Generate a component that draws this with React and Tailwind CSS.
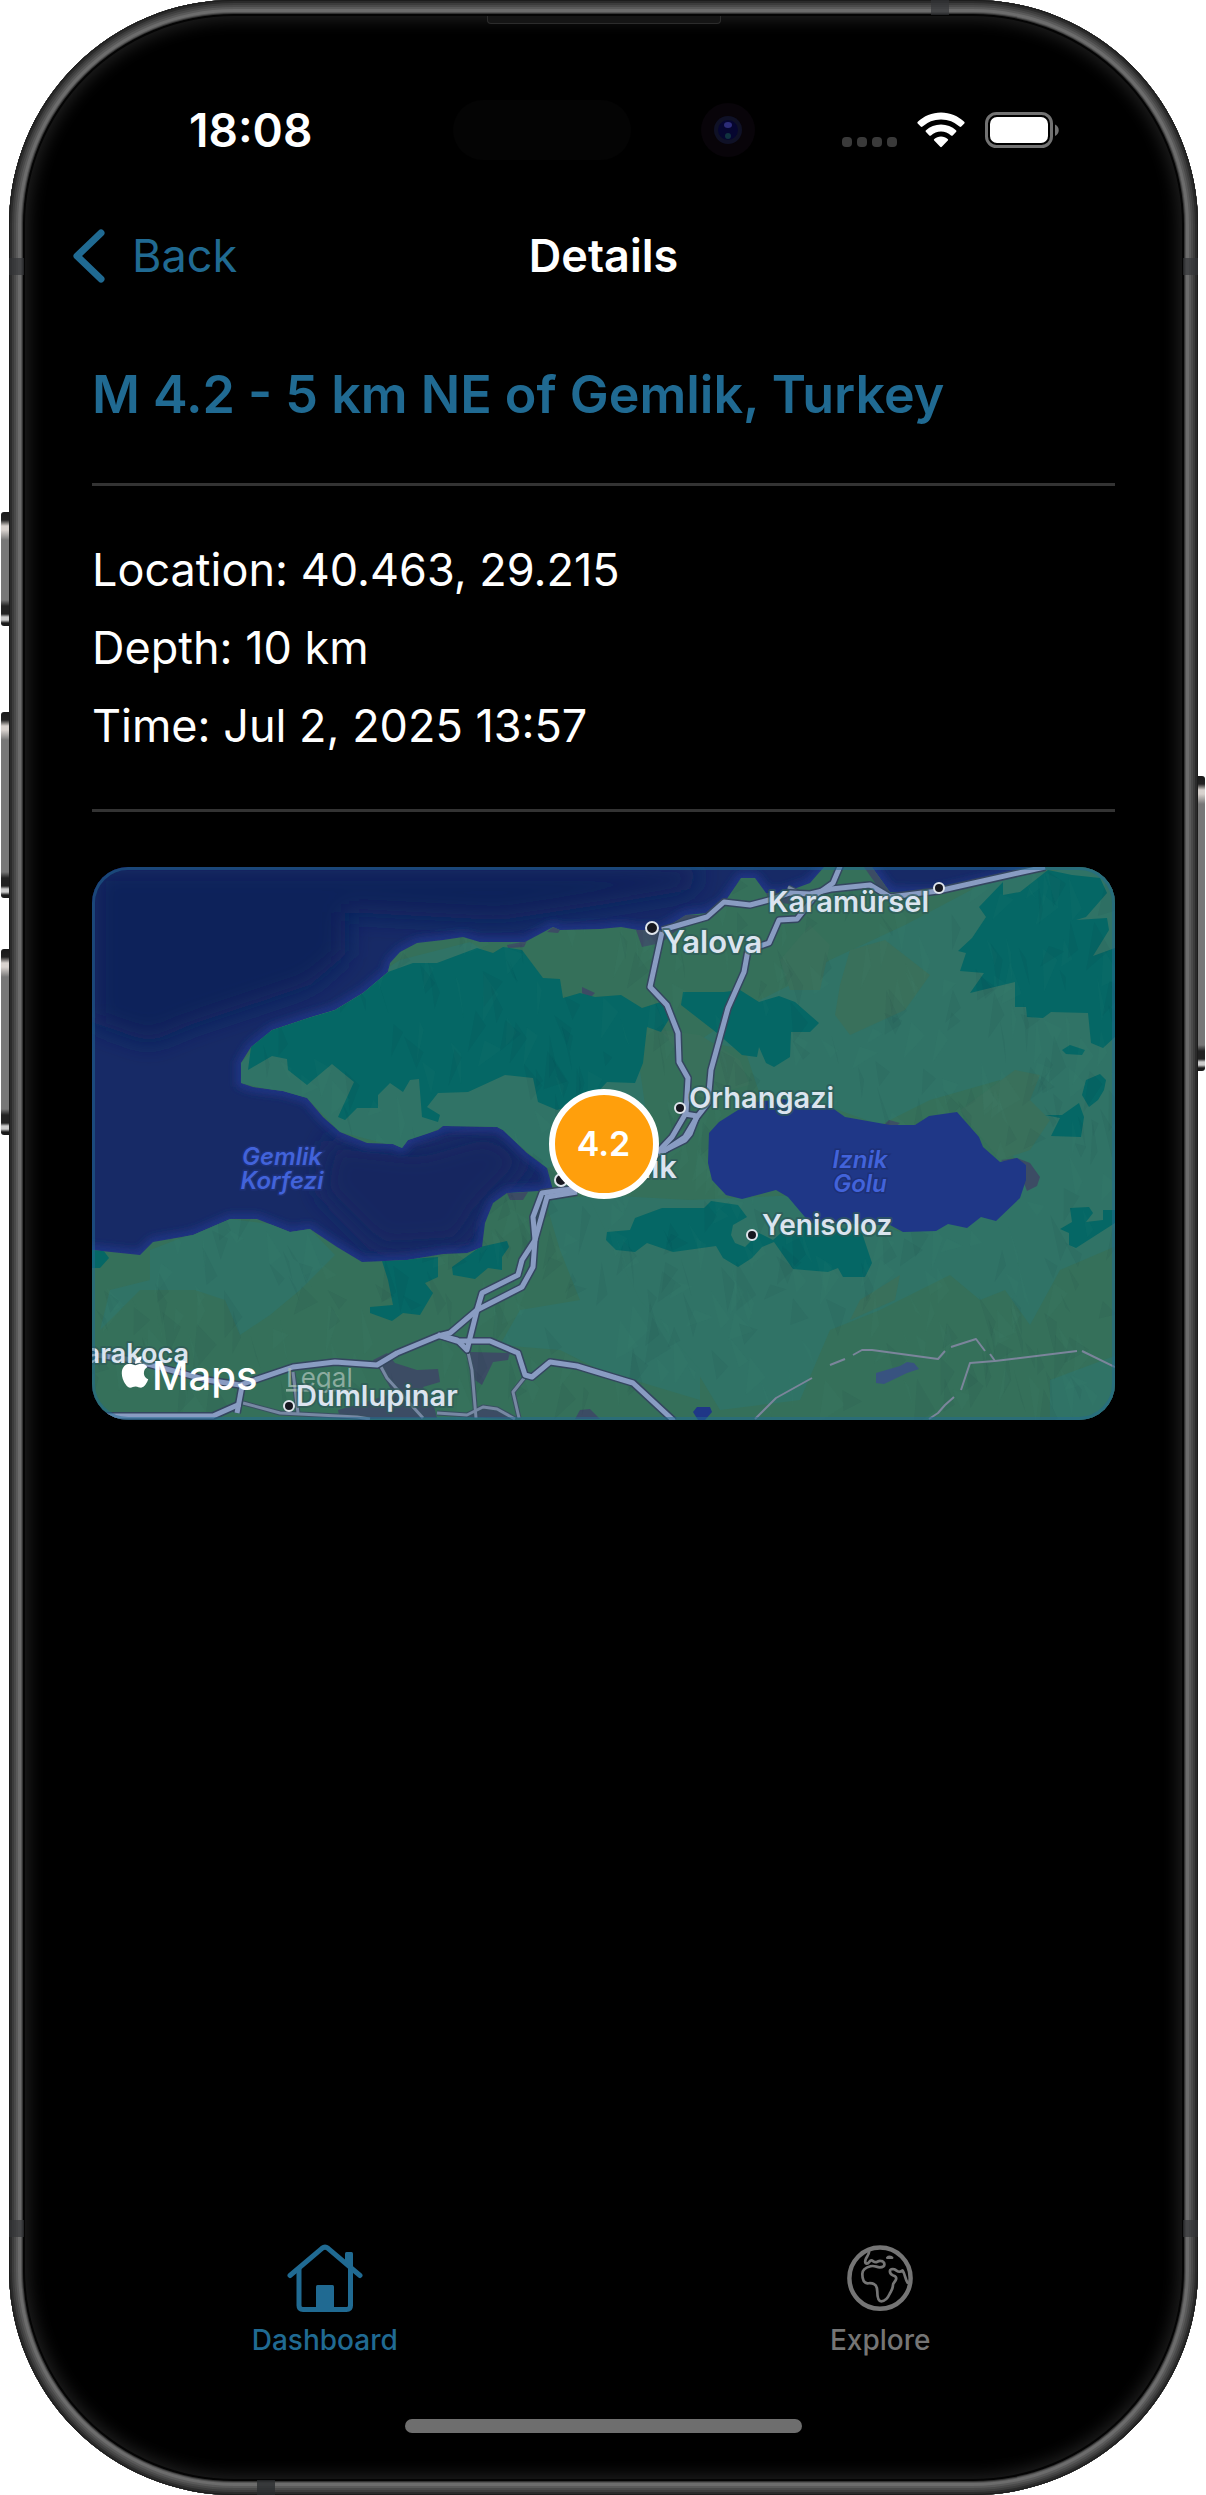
import React from "react";
import { FaApple } from "react-icons/fa";

const SEA_DEEP =
  "92,867 600,867 700,867 690,890 600,905 500,920 400,915 345,912 345,955 310,985 190,1025 150,1042 92,1022";

const LAND =
  "241,1063 251,1047 272,1030 308,1018 335,1010 363,993 388,972 390,963 400,952 417,943 443,940 463,937 480,942 525,942 553,927 560,930 600,929 621,927 638,930 662,930 686,915 707,913 724,903 741,878 755,878 766,893 783,893 810,883 824,867 824,850 872,850 872,867 890,892 934,893 1044,867 1044,850 1130,850 1130,1440 70,1440 70,1250 92,1250 140,1255 153,1242 193,1235 230,1219 257,1219 290,1232 310,1229 337,1247 362,1262 407,1260 443,1254 467,1253 482,1247 485,1223 493,1203 507,1193 553,1190 547,1168 527,1153 503,1130 497,1127 443,1126 438,1130 408,1140 402,1148 393,1144 367,1143 340,1132 323,1117 307,1098 283,1091 253,1087 241,1083";

const HILLS = [
  "241,1063 272,1030 308,1018 400,960 470,942 500,960 560,1060 640,1070 650,1140 547,1168 497,1127 443,1126 402,1148 340,1132 307,1098 241,1083",
  "790,985 830,960 905,925 990,880 1130,860 1130,1240 1060,1270 1030,1325 1005,1290 980,1300 950,1275 880,1310 830,1330 800,1400 720,1410 690,1360 640,1350 590,1290 560,1240 545,1200 600,1195 690,1200 800,1195 900,1232 1030,1180 980,1110 1000,1080 930,1100 880,1125 830,1107 760,1095 745,1050 700,1040 760,1000",
  "150,1250 230,1219 310,1229 335,1255 300,1290 270,1315 240,1335 225,1300 195,1290 140,1290 100,1330 110,1290 150,1280",
  "545,1200 590,1200 640,1300 700,1370 700,1400 600,1370 560,1350 500,1345 520,1310 580,1300 560,1250",
  "1050,1380 1130,1350 1130,1430 1050,1430",
];

const MEADOWS = [
  "850,950 885,940 930,975 905,1010 850,1035 835,1015 840,985",
  "960,1110 1015,1070 1040,1075 1030,1100 1050,1120 1030,1150 1000,1160 975,1130",
  "660,1030 700,1035 740,1060 750,1085 690,1100 685,1060",
  "780,960 810,925 830,945 820,990 790,990",
  "860,1300 900,1275 895,1300 850,1320",
];

const FORESTS = [
  "251,1047 272,1030 308,1018 335,1010 363,993 388,972 413,963 437,963 477,948 493,953 503,947 522,950 543,978 560,979 563,998 580,993 595,997 621,995 642,1008 667,1000 673,1013 661,1032 647,1027 643,1063 635,1083 607,1082 590,1100 557,1110 538,1102 533,1078 505,1075 468,1092 438,1093 427,1107 440,1115 438,1122 422,1117 419,1079 410,1080 403,1092 390,1083 378,1095 378,1108 357,1108 345,1120 338,1117 354,1082 332,1064 307,1085 288,1070 287,1059 272,1056 248,1070",
  "683,992 724,992 740,990 759,1002 779,996 795,1002 819,1023 810,1032 791,1032 790,1057 774,1067 766,1063 759,1047 757,1057 742,1055 717,1033 681,1005",
  "1003,882 1003,895 1020,892 1048,870 1072,875 1100,878 1107,893 1086,917 1076,920 1107,918 1109,930 1093,956 1115,948 1115,1037 1103,1048 1091,1043 1088,1013 1051,1012 1043,1018 1027,1017 1026,1007 1015,1007 1015,982 970,993 984,973 960,971 966,953 958,951 972,938 986,917 979,907",
  "1062,1050 1070,1045 1085,1050 1082,1055 1066,1054",
  "1086,1080 1100,1074 1106,1080 1104,1090 1098,1100 1089,1107 1082,1095",
  "1045,1115 1062,1115 1079,1103 1084,1117 1081,1137 1051,1136 1060,1118",
  "1070,1208 1089,1207 1093,1213 1086,1222 1103,1220 1103,1210 1115,1210 1115,1223 1076,1248 1069,1245 1069,1233 1060,1229 1072,1222",
  "607,1232 630,1230 635,1218 662,1208 704,1208 711,1201 738,1205 747,1217 733,1225 731,1235 735,1243 745,1247 759,1233 773,1240 790,1225 810,1220 862,1233 872,1263 865,1277 843,1277 838,1268 828,1272 793,1269 774,1242 762,1247 752,1258 738,1267 723,1258 716,1246 673,1252 647,1243 635,1252 616,1250 606,1240",
  "382,1261 438,1257 438,1277 425,1283 433,1293 420,1315 403,1313 392,1321 370,1313 370,1307 393,1305 388,1280",
  "452,1267 480,1247 507,1241 509,1247 502,1257 502,1270 488,1268 475,1279 453,1275",
  "92,1249 103,1250 109,1258 100,1268 92,1268",
];

const LAKE =
  "709,1133 719,1122 738,1110 755,1102 783,1099 831,1107 845,1117 890,1125 915,1125 929,1116 957,1112 979,1137 983,1147 1000,1162 1017,1158 1026,1165 1026,1180 1020,1198 996,1221 981,1217 967,1228 948,1224 936,1231 903,1232 890,1225 810,1223 788,1197 776,1190 742,1199 726,1195 712,1180 708,1163";

const TOWNS = [
  "1001,1160 1017,1158 1030,1163 1040,1177 1037,1186 1027,1191 1024,1183 1026,1165 1015,1160 1005,1163",
  "373,1360 387,1353 395,1363 417,1370 438,1369 440,1382 423,1387 433,1403 437,1418 340,1419 338,1410 363,1403 393,1393 382,1373",
  "470,1352 510,1353 508,1360 493,1362 482,1385 475,1380",
  "463,1417 480,1408 510,1413 513,1419",
  "580,1410 590,1409 600,1419 575,1419",
  "636,930 662,930 683,915 704,915 680,928 661,943 642,947",
  "766,893 783,893 800,905 770,902",
  "864,867 872,867 890,892 880,890",
  "507,945 527,941 524,947 508,948",
  "547,932 553,927 560,930 558,933",
  "582,987 595,993 590,998 582,993",
  "507,1193 528,1192 523,1200 510,1200",
  "889,1120 900,1123 895,1127 883,1126",
];

const HIGHWAYS = [
  "662,930 707,917 724,902 750,905 769,900 790,893 810,894 831,889 870,885 890,897 938,891 1045,867",
  "841,864 833,883 816,895 797,919 779,920 769,943 748,950 744,972 728,1008 711,1070 708,1103 697,1117 685,1137 664,1151",
  "662,932 650,987 667,1005 678,1033 679,1062 688,1078 686,1113 672,1137 655,1155",
  "685,1114 697,1116 690,1134 685,1140 661,1152 600,1187 563,1190 542,1193 533,1217 535,1240 522,1260 518,1275 482,1293 477,1310 467,1350 457,1340 438,1335",
  "577,1192 547,1197 535,1240 533,1267 522,1287 477,1310 450,1333 438,1336 397,1353 377,1365 335,1362 293,1367 240,1385 207,1380 133,1360 88,1354",
  "438,1335 457,1341 490,1341 518,1353 525,1375 532,1377 550,1362 577,1366 590,1370 633,1383 674,1421",
  "242,1386 237,1413",
  "240,1404 213,1416 88,1416",
];

const STREETS = [
  "243,1403 280,1413 357,1417 370,1419",
  "293,1372 298,1413",
  "380,1365 387,1378 423,1418",
  "468,1352 472,1370 476,1418",
  "437,1413 467,1415 483,1407 497,1409 515,1419",
  "525,1377 513,1392 519,1418",
  "788,887 800,893",
];

const BORDERS = [
  "755,1419 776,1398 812,1378",
  "830,1365 845,1359",
  "853,1355 862,1350 872,1350 938,1359 945,1351",
  "951,1347 976,1339 985,1351",
  "990,1354 995,1361",
  "1077,1351 995,1361 970,1363 961,1390",
  "954,1397 945,1405 938,1413 929,1419",
  "1082,1351 1115,1367",
];

const CITY_DOTS = [
  [652, 928, 6],
  [939, 888, 5],
  [680, 1108, 5],
  [752, 1235, 5],
  [289, 1406, 5],
  [561, 1180, 6],
];

// Small shaded facets that give the land its relief.
function makeFacets(count) {
  let seed = 7;
  const rnd = () => {
    seed = (seed * 16807) % 2147483647;
    return seed / 2147483647;
  };
  return Array.from({ length: count }, () => {
    const x = 92 + rnd() * 1023;
    const y = 870 + rnd() * 520;
    const w = 4 + rnd() * 16;
    const h = 14 + rnd() * 36;
    const lean = (rnd() - 0.4) * 22;
    return {
      points: `${x},${y} ${x + w},${y + h * (0.2 + rnd() * 0.6)} ${x + lean},${y + h}`,
      light: rnd() > 0.5,
    };
  });
}
const FACETS = makeFacets(650);

function MapLabel({ x, y, size, anchor = "start", children }) {
  return (
    <text
      x={x}
      y={y}
      fontSize={size}
      textAnchor={anchor}
      className="fill-[#dbe4ef] stroke-[#2f5a58]/70 font-semibold [paint-order:stroke]"
      strokeWidth="4"
      strokeLinejoin="round"
    >
      {children}
    </text>
  );
}

function EpicenterMap() {
  return (
    <div className="relative overflow-hidden rounded-[36px] bg-[#172a66]">
      <svg viewBox="92 867 1023 553" className="block w-full" role="img" aria-label="Map of the epicenter">
        <defs>
          <filter id="soft" x="-20%" y="-20%" width="140%" height="140%">
            <feGaussianBlur stdDeviation="12" />
          </filter>
          <filter id="shore" x="-20%" y="-20%" width="140%" height="140%">
            <feGaussianBlur stdDeviation="4" />
          </filter>
          <clipPath id="land">
            <polygon points={LAND} />
          </clipPath>
        </defs>

        <rect x="92" y="867" width="1023" height="553" fill="#172a66" />
        <polygon points={SEA_DEEP} fill="#0d225a" filter="url(#soft)" />
        <polygon points="330,1140 420,1150 490,1130 530,1160 480,1210 460,1245 380,1250 320,1190" fill="#182560" filter="url(#soft)" />
        <polygon points={LAND} fill="none" stroke="#21398c" strokeWidth="8" filter="url(#shore)" />

        <polygon points={LAND} fill="#35705a" />
        <g clipPath="url(#land)">
          {HILLS.map((p) => (
            <polygon key={p} points={p} fill="#307366" />
          ))}
          {MEADOWS.map((p) => (
            <polygon key={p} points={p} fill="#39705b" />
          ))}
          {TOWNS.map((p) => (
            <polygon key={p} points={p} fill="#3c4c64" />
          ))}
          {FORESTS.map((p) => (
            <polygon key={p} points={p} fill="#056765" />
          ))}
          {FACETS.map((f) => (
            <polygon key={f.points} points={f.points} fill={f.light ? "#4fa08a" : "#0b2b33"} opacity="0.05" />
          ))}
        </g>

        <polygon points={LAKE} fill="#1f3787" />
        <polygon points="876,1373 900,1366 907,1362 914,1363 919,1369 907,1373 884,1384 876,1383" fill="#385380" />
        <polygon points="693,1412 697,1407 710,1407 712,1412 705,1420 698,1420" fill="#1f3787" />

        <g fill="none" strokeLinejoin="round">
          {BORDERS.map((p) => (
            <polyline key={p} points={p} stroke="#7b859b" strokeWidth="2" />
          ))}
          {STREETS.map((p) => (
            <polyline key={p} points={p} stroke="#3a5062" strokeWidth="5" />
          ))}
          {STREETS.map((p) => (
            <polyline key={p} points={p} stroke="#7788a3" strokeWidth="3" />
          ))}
          {HIGHWAYS.map((p) => (
            <polyline key={p} points={p} stroke="#34465f" strokeWidth="8" />
          ))}
          {HIGHWAYS.map((p) => (
            <polyline key={p} points={p} stroke="#899cc2" strokeWidth="5" />
          ))}
        </g>

        {CITY_DOTS.map(([x, y, r]) => (
          <circle key={x} cx={x} cy={y} r={r} fill="#16171f" stroke="#dfe5ec" strokeWidth="2" />
        ))}

        <MapLabel x={663} y={953} size={31}>Yalova</MapLabel>
        <MapLabel x={768} y={912} size={29}>Karamürsel</MapLabel>
        <MapLabel x={689} y={1108} size={29}>Orhangazi</MapLabel>
        <MapLabel x={762} y={1235} size={28}>Yenisoloz</MapLabel>
        <MapLabel x={677} y={1178} size={31} anchor="end">Gemlik</MapLabel>
        <MapLabel x={189} y={1363} size={27} anchor="end">Karakoca</MapLabel>

        <g className="fill-[#4263da] stroke-[#1d3076] font-semibold italic [paint-order:stroke]" fontSize="24" textAnchor="middle" strokeWidth="3">
          <text x="282" y="1165">Gemlik</text>
          <text x="282" y="1189">Korfezi</text>
          <text x="860" y="1168">Iznik</text>
          <text x="860" y="1192">Golu</text>
        </g>

        <a href="#legal">
          <text x="286" y="1387" fontSize="26" className="fill-[#a9c1b8]/75 underline">
            Legal
          </text>
        </a>
        <MapLabel x={296} y={1406} size={29}>Dumlupinar</MapLabel>

        <FaApple x="117" y="1354" size={36} color="#fff" />
        <text x="152" y="1390" fontSize="40" className="fill-white font-medium">
          Maps
        </text>
      </svg>

      <div className="pointer-events-none absolute inset-0 rounded-[36px] border-[3px] border-[#1f6a94]/50" />
      <div className="absolute top-1/2 left-1/2 flex size-[110px] -translate-1/2 items-center justify-center rounded-full border-[6px] border-white bg-[#ff9f0c] text-[34px] font-semibold text-white">
        4.2
      </div>
    </div>
  );
}

function StatusBar() {
  return (
    <div className="grid h-[60px] grid-cols-[1fr_auto_1fr] items-center">
      <time className="pl-[180px] text-[46px] leading-[60px] font-semibold">18:08</time>
      <div className="flex w-[302px] items-center justify-between">
        <span className="h-[60px] w-[178px] rounded-full bg-[#040404]" />
        <span className="flex size-[54px] items-center justify-center rounded-full bg-[#080409]">
          <svg viewBox="0 0 30 30" className="size-[30px]" aria-hidden="true">
            <circle cx="15" cy="15" r="14" fill="#0f1126" />
            <circle cx="15" cy="15" r="10" fill="#060630" />
            <ellipse cx="15" cy="10" rx="4" ry="3" fill="#2c2c78" />
            <circle cx="15" cy="21" r="3" fill="#10323f" />
          </svg>
        </span>
      </div>
      <div className="flex items-center justify-end pr-[138px]">
        <span className="mt-[24px] mr-[20px] flex gap-[5px]">
          {[0, 1, 2, 3].map((i) => (
            <span key={i} className="size-[10px] rounded-[4px] bg-[#3a3a3a]" />
          ))}
        </span>
        <svg viewBox="0 0 48 36" className="mr-[20px] h-[36px] w-[48px]" aria-label="Wi-Fi">
          <path d="M24 0.5C33 .5 41.200 4 47.200 9.800c.6.6.6 1.200.1 1.800l-3 3c-.6.6-1.200.6-1.800 0A27 27 0 0 0 24 7.500 27 27 0 0 0 5.500 14.600c-.6.6-1.200.6-1.800 0l-3-3c-.5-.6-.5-1.200.1-1.800C6.800 4 15 .5 24 .5z" fill="#fff" />
          <path d="M24 12.500c5.800 0 11 2.200 15 5.800.6.6.6 1.200 0 1.800l-3.300 3.300c-.5.5-1.200.5-1.700 0A15 15 0 0 0 24 19.500a15 15 0 0 0-10 3.900c-.5.500-1.200.500-1.700 0L9 20.100c-.6-.6-.6-1.200 0-1.800 4-3.600 9.200-5.800 15-5.800z" fill="#fff" />
          <path d="M24 24.500c2.600 0 4.900.9 6.700 2.400.6.5.6 1.200.1 1.700l-6 6.200c-.5.5-1.100.5-1.600 0l-6-6.200c-.5-.5-.5-1.200.1-1.700 1.800-1.500 4.100-2.400 6.700-2.400z" fill="#fff" />
        </svg>
        <svg viewBox="0 0 75 36" className="h-[36px] w-[75px]" aria-label="Battery full">
          <rect x="1.500" y="1.500" width="65" height="33" rx="10" fill="none" stroke="#727272" strokeWidth="3" />
          <rect x="5" y="5" width="58" height="26" rx="7" fill="#fff" />
          <path d="M70 12.500c5 2.500 5 9 0 11.500z" fill="#727272" />
        </svg>
      </div>
    </div>
  );
}

function HouseIcon() {
  return (
    <svg viewBox="0 0 76 68" className="h-[68px] w-[76px]" fill="none" stroke="currentColor" strokeWidth="5" strokeLinecap="round" strokeLinejoin="round" aria-hidden="true">
      <path d="M3 31.500 35 4.300q3-2.400 6 0L73 31.500" />
      <path d="M12 25v36.500q0 4 4 4h43.500q4 0 4-4V25" />
      <path d="M58 9.500q0-1.500 1.500-1.500h5q1.500 0 1.500 1.500V26l-8-7z" fill="currentColor" stroke="none" />
      <path d="M29 65V42.500q0-1.500 1.500-1.500h15q1.500 0 1.500 1.500V65z" fill="currentColor" stroke="none" />
    </svg>
  );
}

function GlobeIcon() {
  return (
    <svg viewBox="145 104 194 195" className="h-[68px] w-[66px]" fill="none" stroke="currentColor" strokeWidth="8" strokeLinecap="round" strokeLinejoin="round" aria-hidden="true">
      <circle cx="242" cy="202" r="90" strokeWidth="13" />
      <path d="M210 124c-1 9-6 14-9 20-4 8-3 15 2 15 7 0 8-9 13-9 6 0 7 5 13 5 5 0 9-5 14-4 6 0 12 4 12 10 0 8-7 9-14 9-10-1-16-6-27-3-12 3-24 11-24 23 0 15 3 26 15 27 8 0 13-1 19 2 9 4 10 12 10 22 0 12 2 29 12 29 14 0 20-12 25-23 5-10 9-14 9-24 0-9 6-8 9-17 2-6-1-10-8-12-6-2-10-7-10-13 0-5 7-7 13-5 7 3 10 8 16 7 5 0 7-3 8-4 4 6 6 12 8 19 2 7 4 13 7 17" />
      <path d="M263 142c4-4 12-4 15 0z" strokeWidth="7" fill="currentColor" />
    </svg>
  );
}

function Tab({ icon, label, active }) {
  return (
    <a
      href={"#" + label.toLowerCase()}
      aria-current={active ? "page" : undefined}
      className={
        active
          ? "flex flex-col items-center gap-[12px] text-[#206a92]"
          : "flex flex-col items-center gap-[12px] text-[#757575]"
      }
    >
      {icon}
      <span className="text-[28px] leading-[32px] font-medium">{label}</span>
    </a>
  );
}

const SIDE_BUTTON =
  "absolute w-[9px] bg-[linear-gradient(to_bottom,#1a1a1a_0px,#222_8px,#d8d2ce_14px,#d8d2ce_18px,#777_28px,#777_calc(100%-26px),#222_calc(100%-20px),#222_calc(100%-12px),#ccc_calc(100%-9px),#ccc_calc(100%-6px),#1a1a1a_calc(100%-3px))]";

export default function App() {
  return (
    <div className="min-h-screen overflow-hidden bg-white pr-[8px] pl-[9px] font-[Inter,sans-serif] text-white">
      <div className="relative">
        <span className={SIDE_BUTTON + " top-[512px] -left-[8px] h-[114px] rounded-l-[3px]"} />
        <span className={SIDE_BUTTON + " top-[712px] -left-[8px] h-[186px] rounded-l-[3px]"} />
        <span className={SIDE_BUTTON + " top-[949px] -left-[8px] h-[186px] rounded-l-[3px]"} />
        <span className={SIDE_BUTTON + " top-[776px] -right-[7px] h-[295px] rounded-r-[3px]"} />

        <div className="relative flex min-h-screen flex-col overflow-hidden rounded-[225px] bg-black pt-[100px] shadow-[inset_0_0_0_1px_#1c1c1c,inset_0_0_0_3px_#2b2b2b,inset_0_0_0_5px_#3c3c3c,inset_0_0_0_7px_#4a4a4a,inset_0_0_0_9px_#5a5a5a,inset_0_0_0_12px_#6c6c6c,inset_0_0_0_13px_#555,inset_0_0_0_14px_#333,inset_0_0_0_16px_#040404,inset_0_0_16px_20px_#1f1f1f]">
          <span className="absolute top-[16px] left-1/2 h-[8px] w-[234px] -translate-x-1/2 rounded-b-[4px] border border-t-0 border-[#2c2c2c] bg-[#151515]" />
          <span className="absolute top-0 left-[922px] h-[15px] w-[18px] bg-[#333538]/70" />
          <span className="absolute bottom-0 left-[248px] h-[15px] w-[18px] bg-[#2b2d2f]/80" />
          <span className="absolute top-[258px] left-0 h-[17px] w-[15px] bg-[#333538]/70" />
          <span className="absolute top-[258px] right-0 h-[17px] w-[15px] bg-[#333538]/70" />
          <span className="absolute bottom-[258px] left-0 h-[17px] w-[15px] bg-[#333538]/70" />
          <span className="absolute right-0 bottom-[258px] h-[17px] w-[15px] bg-[#333538]/70" />

          <StatusBar />

          <header className="mt-[64px] grid h-[64px] grid-cols-[1fr_auto_1fr] items-center">
            <button type="button" className="flex items-center gap-[26px] justify-self-start pl-[63px] text-[45px] leading-[64px] text-[#206a92]">
              <svg viewBox="0 0 34 54" className="h-[54px] w-[34px]" fill="none" stroke="currentColor" strokeWidth="7" strokeLinecap="round" strokeLinejoin="round" aria-hidden="true">
                <path d="M29 4 5 27l24 23" />
              </svg>
              Back
            </button>
            <h1 className="text-[45px] leading-[64px] font-semibold">Details</h1>
          </header>

          <main className="mt-[75px] px-[83px]">
            <h2 className="text-[52px] leading-[64px] font-semibold text-[#206a92]">
              M 4.2 - 5 km NE of Gemlik, Turkey
            </h2>
            <hr className="mt-[56px] h-[3px] border-0 bg-[#333]" />
            <div className="mt-[45px] text-[45px] leading-[78px]">
              <p>Location: 40.463, 29.215</p>
              <p>Depth: 10 km</p>
              <p>Time: Jul 2, 2025 13:57</p>
            </div>
            <hr className="mt-[44px] mb-[55px] h-[3px] border-0 bg-[#333]" />
            <EpicenterMap />
          </main>

          <nav className="mt-auto grid grid-cols-2 pr-[40px] pl-[38px]">
            <Tab icon={<HouseIcon />} label="Dashboard" active />
            <Tab icon={<GlobeIcon />} label="Explore" />
          </nav>
          <div className="mt-[63px] mb-[62px] h-[14px] w-1/3 self-center rounded-full bg-[#6e6e6e]" />
        </div>
      </div>
    </div>
  );
}
